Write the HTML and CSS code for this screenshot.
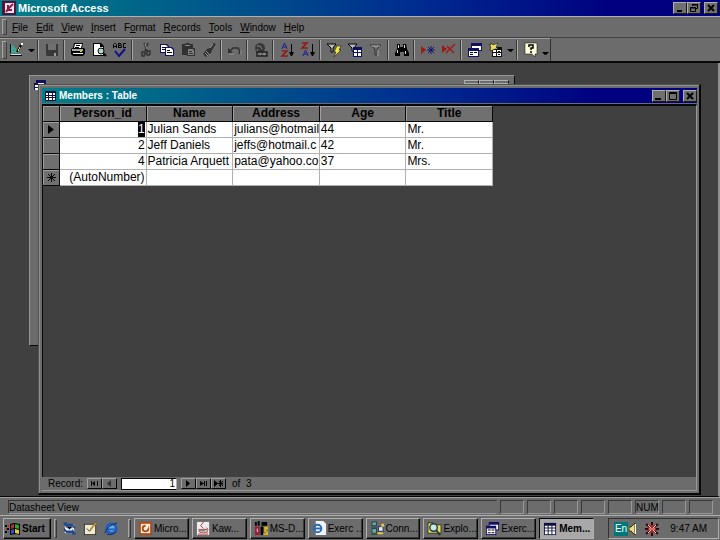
FILE: index.html
```html
<!DOCTYPE html>
<html lang="en">

<head>
  <meta charset="UTF-8">
  <meta name="viewport" content="width=device-width, initial-scale=1.0">
  <title>Microsoft Access</title>
  <link rel="stylesheet" href="styles.css">
</head>

<body>
  <header class="titlebar app-title">
    <svg class="app-icon" width="14" height="14" viewBox="0 0 14 14"><path fill="#5a1038" d="M0 0h14v14H0z"/><path fill="#f4e4ee" d="M3 2h9v10H3z"/><path fill="none" stroke="#8a1848" stroke-width="2" d="M4 11l2-3M6 8l5-5M6 4v5h4"/></svg>
    <h1>Microsoft Access</h1>
    <div class="controls">
      <button aria-label="Minimize"><svg width="12" height="10" viewBox="0 0 12 10"><path d="M3 7h5v2H3z"/></svg></button>
      <button aria-label="Restore"><svg width="12" height="10" viewBox="0 0 12 10"><path fill="none" stroke="#000" d="M4.5 3V1.5h5v4H8M2.500 4.500h5v4h-5zM2 5h6M4 2h6"/></svg></button>
      <button class="close" aria-label="Close"><svg width="12" height="10" viewBox="0 0 12 10"><path fill="none" stroke="#000" stroke-width="2" d="M3 2l6 6M9 2L3 8"/></svg></button>
    </div>
  </header>

  <nav class="menu">
    <a href="#"><u>F</u>ile</a>
    <a href="#"><u>E</u>dit</a>
    <a href="#"><u>V</u>iew</a>
    <a href="#"><u>I</u>nsert</a>
    <a href="#">F<u>o</u>rmat</a>
    <a href="#"><u>R</u>ecords</a>
    <a href="#"><u>T</u>ools</a>
    <a href="#"><u>W</u>indow</a>
    <a href="#"><u>H</u>elp</a>
  </nav>

  <div class="toolbar">
    <div class="tools">
      <button aria-label="View"><svg viewBox="0 0 16 16"><path fill="#30b0a0" fill-rule="evenodd" d="M2 2l9 9H2zM4 7v2h2z"/><path d="M1 13h12v1H1zM1 2h1v9H1z"/><path fill="#ddd" d="M2 12h10v1H2z"/><path fill="none" stroke="#000" stroke-width="2" d="M12 3l-4 7"/><path fill="#e8e050" d="M10 5h1v2h-1zM9 7h1v2H9z"/><path fill="#fff" d="M12 1h2v2h-2z"/></svg></button>
      <button class="drop" aria-label="View options"></button>
      <i class="sep"></i>
      <button aria-label="Save"><svg viewBox="0 0 16 16"><path fill="#383838" d="M2 2h12v12H3l-1-1z"/><path fill="#707070" d="M4 2h8v6H4z"/><path fill="#999" d="M10 11h2v3h-2z"/></svg></button>
      <i class="sep"></i>
      <button aria-label="Print"><svg viewBox="0 0 16 16"><path d="M4 1h9l-1 5h2l1 1v5l-2 2H3l-2-2V7l2-1z"/><path fill="#fff" d="M5 2h7l-1 4H4zM3 11h10v1H3z"/><path fill="#aaa" d="M2 7h11v2H2z"/><path d="M6 3h4v1H6zM5 5h4v1H5z"/><path fill="#e8e020" d="M10 9h2v1h-2z"/></svg></button>
      <button aria-label="Print Preview"><svg viewBox="0 0 16 16"><path d="M2 1h8l3 3v10H2z"/><path fill="#fff" d="M3 2h6v3h3v8H3z"/><circle cx="10" cy="9" r="3" fill="#a8d8d8" stroke="#000"/><path stroke="#000" stroke-width="2" d="M12 11l3 3"/></svg></button>
      <button aria-label="Spelling"><svg viewBox="0 0 16 16"><path fill="none" stroke="#000" d="M1.5 6V2.5l1-1h1l1 1V6M2 4.500h3M6.500 1v5M6 1.500h3v2H6M9.500 4v1.500H6M14 1.500h-2.500v4H14"/><path fill="none" stroke="#10108c" stroke-width="2" d="M3 9l4 5 6-7"/></svg></button>
      <i class="sep"></i>
      <button aria-label="Cut"><svg viewBox="0 0 16 16"><path fill="none" stroke="#303030" stroke-width="1.5" d="M6 1l3 8M10 1L7 9"/><path fill="none" stroke="#303030" stroke-width="1.5" d="M4 10h3v4H4zM9 9h3v4H9z"/><path stroke="#999" d="M7 2l2 5M7 14h1M12 14h1"/></svg></button>
      <button aria-label="Copy"><svg viewBox="0 0 16 16"><path fill="#101060" d="M1 2h7l2 2v7H1z"/><path fill="#fff" d="M2 3h5l2 2v5H2z"/><path fill="#101060" d="M6 5h7l2 2v7H6z"/><path fill="#fff" d="M7 6h5l2 2v5H7z"/><path d="M3 5h3v1H3zM3 7h3v1H3zM8 8h3v1H8zM8 10h5v1H8z"/></svg></button>
      <button aria-label="Paste"><svg viewBox="0 0 16 16"><path fill="#303030" d="M2 2h3l1-1h3l1 1h3v4H7v7H2z"/><path fill="#888" d="M5 3h5v1H5z"/><path fill="#303030" d="M7 6h8v8H7z"/><path fill="#808080" d="M8 7h5l1 2v4H8z"/><path fill="#303030" d="M9 9h3v1H9zM9 11h4v1H9z"/></svg></button>
      <button aria-label="Format Painter"><svg viewBox="0 0 16 16"><path fill="#303030" d="M12 1l3 1-4 6-1 3-5 4-3-3 4-5 3-1z"/><path stroke="#999" d="M4 11l3 3M5 9l4 4M9 6l3-4"/></svg></button>
      <i class="sep"></i>
      <button aria-label="Undo"><svg viewBox="0 0 16 16"><path fill="none" stroke="#303030" stroke-width="1.5" d="M3 9l3-3h5l2 3-1 3"/><path fill="#303030" d="M1 6v5h5z"/><path stroke="#909090" d="M2 12h5M14 8v4"/></svg></button>
      <i class="sep"></i>
      <button aria-label="Insert Hyperlink"><svg viewBox="0 0 16 16"><circle cx="7" cy="6" r="5" fill="#383838"/><path stroke="#888" fill="none" d="M4 4h3l2 3M5 7l-1 2"/><path fill="#777" stroke="#202020" stroke-width="1.5" d="M4 10h5v4H4zM9 10h5v4H9z"/><path stroke="#999" d="M7 12h5"/></svg></button>
      <i class="sep"></i>
      <button aria-label="Sort Ascending"><svg viewBox="0 0 16 16"><path fill="none" stroke="#202090" d="M3 7l2.500-6L8 7M4 5h4"/><path fill="none" stroke="#901818" stroke-width="1.5" d="M3 9h5l-5 5h6"/><path stroke="#000" d="M12.500 2v11"/><path d="M10 10h5l-2 4h-1z"/></svg></button>
      <button aria-label="Sort Descending"><svg viewBox="0 0 16 16"><path fill="none" stroke="#901818" stroke-width="1.5" d="M2 1h5L2 6h6"/><path fill="none" stroke="#202090" d="M3 14l2.500-6L8 14M4 12h4"/><path stroke="#000" d="M12.500 2v11"/><path d="M10 10h5l-2 4h-1z"/></svg></button>
      <i class="sep"></i>
      <button aria-label="Filter By Selection"><svg viewBox="0 0 16 16"><path fill="#bbb" stroke="#000" d="M1 2h9L7 6v4H5V6z"/><path fill="#f0e850" stroke="#000" stroke-width=".5" d="M11 4h4l-2 4h2l-7 7 2-5H8z"/></svg></button>
      <button aria-label="Filter By Form"><svg viewBox="0 0 16 16"><path fill="#bbb" stroke="#000" d="M1 2h9L7 6v3H5V6z"/><path fill="#101060" d="M6 5h9v10H6z"/><path fill="#fff" d="M7 8h3v2H7zM11 8h3v2h-3zM7 11h3v3H7zM11 11h3v3h-3z"/></svg></button>
      <button aria-label="Apply Filter"><svg viewBox="0 0 16 16"><path fill="#777" stroke="#303030" d="M2 3h11L9 7v6H7V7z"/><path stroke="#aaa" d="M3 4h9M10 8v6"/></svg></button>
      <i class="sep"></i>
      <button aria-label="Find"><svg viewBox="0 0 16 16"><path d="M3 2h3v3h3V2h3l1 5 2 4v3h-5v-4H6v4H1v-3l2-4z"/><path stroke="#ddd" d="M4.500 3v3M3.500 8v3M10.500 3v3M11.500 9v3"/></svg></button>
      <i class="sep"></i>
      <button aria-label="New Record"><svg viewBox="0 0 16 16"><path fill="#a01818" d="M1 4l5 4-5 4z"/><path stroke="#101080" d="M11 4v8M7 8h8M8 5l6 6M14 5l-6 6"/></svg></button>
      <button aria-label="Delete Record"><svg viewBox="0 0 16 16"><path fill="#a01818" d="M1 3l5 4-5 4z"/><path stroke="#a01818" stroke-width="1.5" d="M6 4l7 7M14 2L5 11"/></svg></button>
      <i class="sep"></i>
      <button aria-label="Database Window"><svg viewBox="0 0 16 16"><path fill="#101060" d="M4 1h11v8H4z"/><path fill="#fff" d="M5 4h9v4H5z"/><path fill="#101060" d="M1 6h11v9H1z"/><path fill="#fff" d="M2 9h9v5H2z"/><path d="M3 10h3v1H3zM7 10h3v1H7zM3 12h3v1H3z"/></svg></button>
      <button aria-label="New Object"><svg viewBox="0 0 16 16"><path fill="#101010" d="M4 5h10v10H4z"/><path fill="#fff" d="M5 8h3v2H5zM9 8h4v2H9zM5 11h3v3H5zM9 11h4v3H9z"/><path fill="#f0e060" stroke="#000" stroke-width=".5" d="M3 1l2 2 5-2-2 4 2 2H7L2 9l1-4-2-2h2z"/><path d="M10 12h2v1h-2zM10 9h2v1h-2z"/></svg></button>
      <button class="drop" aria-label="New Object options"></button>
      <i class="sep"></i>
      <button aria-label="Office Assistant"><svg viewBox="0 0 16 16"><path fill="#ffffd8" stroke="#000" stroke-width=".5" d="M2 1h12v11h-2v3l-3-3H2z"/><path fill="none" stroke="#000" stroke-width="1.5" d="M6 5V3h4v3H8v2M8 9v2"/></svg></button>
      <button class="drop low" aria-label="More buttons"></button>
    </div>
  </div>

  <main class="desktop">
    <section class="window back" aria-label="Database">
      <svg width="12" height="10" viewBox="0 0 12 10"><path fill="#101060" d="M2 0h10v10H0V3h2z"/><path fill="#fff" d="M1 5h3v2H1zM1 8h3v2H1zM4 3h6v1H4z"/></svg>
      <div class="hidden-controls"><i></i><i></i><i></i></div>
    </section>

    <section class="window front">
      <div class="titlebar">
        <svg class="app-icon" width="11" height="10" viewBox="0 0 11 10"><path fill="#101040" d="M0 0h11v10H0z"/><path fill="#fff" d="M1 2h9v7H1z"/><path fill="#101040" d="M1 4h9v1H1zM1 6h9v1H1zM3 2h1v7H3zM7 2h1v7H7z"/></svg>
        <h2>Members : Table</h2>
        <div class="controls">
          <button aria-label="Minimize table"><svg width="12" height="10" viewBox="0 0 12 10"><path d="M2 7h6v2H2z"/></svg></button>
          <button aria-label="Maximize table"><svg width="12" height="10" viewBox="0 0 12 10"><path fill="none" stroke="#000" d="M2.500 1.500h7v7h-7zM2 2.500h8"/></svg></button>
          <button class="close" aria-label="Close table"><svg width="12" height="10" viewBox="0 0 12 10"><path fill="none" stroke="#000" stroke-width="2" d="M3 2l6 6M9 2L3 8"/></svg></button>
        </div>
      </div>

      <div class="sheet">
        <table>
          <thead>
            <tr>
              <th class="mark"></th>
              <th>Person_id</th>
              <th>Name</th>
              <th>Address</th>
              <th>Age</th>
              <th>Title</th>
            </tr>
          </thead>
          <tbody>
            <tr>
              <th class="mark"><svg width="6" height="9" viewBox="0 0 6 9"><path d="M0 0l6 4.500L0 9z"/></svg></th>
              <td class="num"><mark>1</mark></td>
              <td>Julian Sands</td>
              <td>julians@hotmail</td>
              <td>44</td>
              <td>Mr.</td>
            </tr>
            <tr>
              <th class="mark"></th>
              <td class="num">2</td>
              <td>Jeff Daniels</td>
              <td>jeffs@hotmail.c</td>
              <td>42</td>
              <td>Mr.</td>
            </tr>
            <tr>
              <th class="mark"></th>
              <td class="num">4</td>
              <td>Patricia Arquett</td>
              <td>pata@yahoo.co</td>
              <td>37</td>
              <td>Mrs.</td>
            </tr>
            <tr>
              <th class="mark"><svg width="9" height="9" viewBox="0 0 9 9"><path stroke="#000" d="M4.500 0v9M0 4.500h9M1 1l7 7M8 1L1 8"/></svg></th>
              <td class="num">(AutoNumber)</td>
              <td></td>
              <td></td>
              <td></td>
              <td></td>
            </tr>
          </tbody>
        </table>
      </div>

      <div class="records">
        <label for="record">Record:</label>
        <div class="group">
          <button aria-label="First record"><svg width="9" height="7" viewBox="0 0 9 7"><path d="M1 1h1v5H1zM5 1v5L2 3.500zM7 1h1v5H7z"/></svg></button>
          <button aria-label="Previous record"><svg width="9" height="7" viewBox="0 0 9 7"><path fill="#333" d="M6 0v7L2 3.500z"/></svg></button>
        </div>
        <input id="record" type="text" value="1">
        <div class="group">
          <button aria-label="Next record"><svg width="9" height="7" viewBox="0 0 9 7"><path d="M2 0v7l4-3.500z"/></svg></button>
          <button aria-label="Last record"><svg width="9" height="7" viewBox="0 0 9 7"><path d="M1 1v5l4-2.500zM5 1h1v5H5zM7 1h1v5H7z"/></svg></button>
          <button aria-label="New record"><svg width="9" height="7" viewBox="0 0 9 7"><path d="M0 0v7l4-3.500z"/><path stroke="#000" d="M6.500 0v7M4 3.500h5M5 1l4 5M9 1L5 6"/></svg></button>
        </div>
        <span>of&nbsp; 3</span>
      </div>
    </section>
  </main>

  <div class="status">
    <span class="message">Datasheet View</span>
    <span></span>
    <span></span>
    <span></span>
    <span></span>
    <span></span>
    <span>NUM</span>
    <span></span>
    <span></span>
  </div>

  <footer class="taskbar">
    <button class="start"><svg width="16" height="14" viewBox="0 0 16 14"><path d="M5 2l4-1 6 1v11l-4-1-6 1zM0 3h2v2H0zM2 6h2v2H2zM0 9h2v2H0z"/><path fill="#c02828" d="M6 3l3-1v4L6 7z"/><path fill="#30a030" d="M10 2l4 1v4l-4-1z"/><path fill="#3050d0" d="M6 8l3-1v4l-3 1z"/><path fill="#e0d030" d="M10 7l4 1v4l-4-1z"/><path fill="#c02828" d="M3 3h1v2H3zM1 6h1v2H1z"/><path fill="#3050d0" d="M3 9h1v2H3z"/></svg>Start</button>
    <i class="grip"></i>
    <div class="quick">
      <button aria-label="Outlook Express"><svg viewBox="0 0 16 16"><path fill="#fff" d="M3 4h10v9H3z"/><path fill="#204890" d="M1 2l4-1v2h6l3 3v3l-3-3H5v2zM15 14l-4 1v-2H5l-3-3V7l3 3h6V8z"/><path stroke="#90a8c8" d="M4 6l4 3 4-3"/></svg></button>
      <button aria-label="Show Desktop"><svg viewBox="0 0 16 16"><path fill="#303030" d="M1 3h13v12H1z"/><path fill="#f0ead0" d="M2 4h11v10H2z"/><path fill="none" stroke="#303030" d="M4 8l3 3 7-10"/><path stroke="#b89030" stroke-width="2" d="M8 9l6-7"/></svg></button>
      <button aria-label="Internet Explorer"><svg viewBox="0 0 16 16"><circle cx="8" cy="8" r="5" fill="#78a8d8" stroke="#1860c0" stroke-width="3"/><path stroke="#1860c0" stroke-width="2" d="M4 9h9"/><path fill="none" stroke="#102860" d="M1 13Q3 5 14 2M3 14q6 2 10-3"/></svg></button>
    </div>
    <i class="grip"></i>
    <div class="tasks">
      <button><svg viewBox="0 0 16 16"><path fill="#b04818" d="M1 1h14v14H1z"/><path fill="#fff0d8" d="M3 3h10v10H3z"/><circle cx="8" cy="8" r="3" fill="none" stroke="#b04818" stroke-width="2"/><path fill="#fff0d8" d="M8 4h3v4H8z"/></svg><span>Micro...</span></button>
      <button><svg viewBox="0 0 16 16"><path fill="#eee" d="M1 1h13v14H1z"/><path fill="none" stroke="#b03838" d="M8 1l-3 4 3 3M3 9h9v3H4zM2 14h11M11 7l2 2"/><path fill="#888" d="M4 9h6v2H4z"/></svg><span>Kaw...</span></button>
      <button><svg viewBox="0 0 16 16"><path d="M1 1h2v4H1zM4 0h2v5H4zM8 1h6v4H8z"/><path fill="#a01838" d="M1 6h5v9H1z"/><path d="M7 6h3v9H7z"/><path fill="#d8b820" d="M11 6h4v3h-2v2h2v4h-5v-2h3v-1h-2z"/><path fill="#ddd" d="M3 8h1v4H3z"/></svg><span>MS-D...</span></button>
      <button><svg viewBox="0 0 16 16"><path fill="#f0f4f8" d="M4 0h8l3 3v12H4z"/><circle cx="6" cy="8" r="4" fill="none" stroke="#2868b8" stroke-width="2"/><path stroke="#2868b8" stroke-width="2" d="M3 8h7"/></svg><span>Exerc ...</span></button>
      <button><svg viewBox="0 0 16 16"><path fill="#68a8a8" stroke="#204040" d="M2 1h5v4H2zM2 8h5v5H2z"/><path fill="#204040" d="M1 6h7v1H1zM1 14h7v1H1z"/><path fill="#e8e8e8" stroke="#182878" d="M9 6h5v5H9z"/><path fill="#e0c840" d="M12 3h3v3h-3zM8 12h6v2H8z"/></svg><span>Conn...</span></button>
      <button><svg viewBox="0 0 16 16"><path fill="#e8d868" stroke="#303020" d="M1 2h5l1 2h8v9H1z"/><circle cx="7" cy="7" r="4" fill="#c8e8e8" stroke="#203838" stroke-width="1.5"/><path stroke="#203838" stroke-width="2" d="M10 10l4 5"/></svg><span>Explo...</span></button>
      <button><svg viewBox="0 0 16 16"><path fill="#101060" d="M4 1h11v9H4z"/><path fill="#fff" d="M5 4h9v5H5z"/><path fill="#101060" d="M1 5h11v10H1z"/><path fill="#fff" d="M2 8h9v6H2z"/><path d="M3 9h3v1H3zM7 9h3v1H7zM3 12h3v1H3zM7 12h3v1H7z"/></svg><span>Exerc...</span></button>
      <button class="active"><svg viewBox="0 0 16 16"><path fill="#101040" d="M1 2h13v13H1z"/><path fill="#fff" d="M2 5h3v2H2zM6 5h3v2H6zM10 5h3v2h-3zM2 8h3v2H2zM6 8h3v2H6zM10 8h3v2h-3zM2 11h3v3H2zM6 11h3v3H6zM10 11h3v3h-3z"/></svg><span>Mem...</span></button>
    </div>
    <div class="tray">
      <span class="lang">En</span>
      <svg width="8" height="12" viewBox="0 0 8 12"><path fill="#e8e080" stroke="#303010" d="M0 4h2l4-4v12L2 8H0z"/><path fill="#fff" d="M6 1h1v10H6z"/></svg>
      <svg class="bug" width="14" height="14" viewBox="0 0 14 14"><path stroke="#300808" stroke-width="2" d="M1 2l12 10M13 2L1 12M7 0v14M0 7h14"/><circle cx="7" cy="7" r="4" fill="#b02020"/><path stroke="#e8c8c8" d="M3 3l3 3M11 3L8 6M3 11l3-3M11 11L8 8M4 7h6"/></svg>
      <time>9:47 AM</time>
    </div>
  </footer>
</body>

</html>
```
FILE: styles.css
```css
* {
  box-sizing: border-box;
}

body {
  margin: 0;
  height: 100vh;
  display: flex;
  flex-direction: column;
  overflow: hidden;
  background-color: #6c6c6c;
  color: #000;
  font-family: "Liberation Sans", Arial, sans-serif;
  font-size: 10px;
}

button {
  padding: 0;
  border: 0;
  background: none;
  color: inherit;
  font: inherit;
}

svg {
  display: block;
  flex: none;
}

/* Title bars */
.titlebar {
  display: flex;
  align-items: center;
  gap: 2px;
  height: 16px;
  padding: 0 2px;
  background: linear-gradient(90deg, #008088, #00508a 34%, #002c90 58%, #000080 85%);
  color: #fff;
}

.titlebar h1,
.titlebar h2 {
  flex: 1;
  margin: 0;
  font-size: 10px;
  font-weight: bold;
}

.titlebar h1 {
  font-size: 11px;
}

.controls {
  display: flex;
}

.controls button {
  width: 14px;
  height: 12px;
  background-color: #707070;
  border: 1px solid;
  border-color: #b0b0b0 #181818 #181818 #b0b0b0;
  overflow: hidden;
}

.controls .close {
  margin-left: 3px;
}

/* Menu and toolbar */
.menu {
  display: flex;
  align-items: center;
  gap: 8px;
  height: 22px;
  padding-left: 12px;
  border-top: 1px solid #b0b0b0;
  border-bottom: 1px solid #404040;
  position: relative;
}

.menu a {
  color: #000;
  text-decoration: none;
}

.menu::before,
.tools::before {
  content: "";
  position: absolute;
  left: 2px;
  top: 2px;
  bottom: 2px;
  width: 3px;
  border: 1px solid;
  border-color: #a8a8a8 #404040 #404040 #a8a8a8;
}

.toolbar {
  display: flex;
  height: 25px;
  border-bottom: 2px solid #080808;
}

.tools {
  position: relative;
  display: flex;
  align-items: center;
  padding-left: 6px;
  border-top: 1px solid #a0a0a0;
  border-right: 1px solid #303030;
}

.tools button {
  width: 21px;
  height: 20px;
  padding: 0 3px;
}

.tools svg {
  width: 16px;
  height: 16px;
}

.tools .drop {
  width: 9px;
  padding: 0 1px;
}

.drop::before {
  content: "";
  display: block;
  border: 3px solid transparent;
  border-top-color: #000;
  border-bottom: 0;
}

.tools .low {
  padding-top: 6px;
}

.sep {
  width: 2px;
  height: 20px;
  margin: 0 2px 0 1px;
  border-left: 1px solid #383838;
  border-right: 1px solid #a8a8a8;
}

/* Child windows */
.desktop {
  flex: 1;
  position: relative;
  background-color: #404040;
  border-right: 2px solid #909090;
  border-bottom: 1px solid #080808;
}

.window {
  position: absolute;
  background-color: #6c6c6c;
  border: 1px solid;
  border-color: #989898 #080808 #080808 #989898;
}

.back {
  left: 29px;
  top: 12px;
  width: 486px;
  height: 271px;
  padding: 4px;
}

.hidden-controls {
  position: absolute;
  right: 5px;
  top: 4px;
  display: flex;
}

.hidden-controls i {
  width: 15px;
  height: 4px;
  border: 1px solid #b0b0b0;
  border-right-color: #080808;
}

.front {
  left: 38px;
  top: 21px;
  right: 17px;
  bottom: 1px;
  display: flex;
  flex-direction: column;
  padding: 3px 2px 2px 3px;
  border-width: 1px 2px 2px 1px;
  border-color: #505050 #080808 #080808 #505050;
  box-shadow: inset 1px 1px #909090;
}

.front .titlebar {
  height: 15px;
  padding: 0 0 0 3px;
  gap: 3px;
}

.sheet {
  flex: 1;
  margin-top: 1px;
  background-color: #404040;
  border: solid #080808;
  border-width: 2px 0 0 1px;
  border-right: 1px solid #989898;
}

table {
  width: 450px;
  table-layout: fixed;
  border-collapse: separate;
  border-spacing: 0;
  font-size: 12px;
  line-height: 15px;
}

th,
td {
  height: 16px;
  padding: 0 1px;
  overflow: hidden;
  white-space: nowrap;
  text-align: left;
}

td {
  padding-right: 0;
  background-color: #fff;
  border-right: 1px solid #b0b0b0;
  border-bottom: 1px solid #b0b0b0;
}

th {
  background-color: #707070;
  border-right: 1px solid #080808;
  border-bottom: 1px solid #080808;
  box-shadow: inset 1px 1px #a0a0a0;
  text-align: center;
}

.mark {
  width: 17px;
  padding: 0;
}

.mark svg {
  margin: 0 auto;
}

.num {
  padding-right: 1px;
  text-align: right;
}

mark {
  display: inline-block;
  background-color: #000;
  color: #fff;
}

/* Record navigator */
.records {
  display: flex;
  align-items: center;
  gap: 4px;
  height: 14px;
  padding-left: 6px;
  border-right: 1px solid #989898;
  border-bottom: 1px solid #989898;
}

.records .group {
  display: flex;
}

.records button {
  display: flex;
  align-items: center;
  justify-content: center;
  width: 15px;
  height: 11px;
  border: 1px solid;
  border-color: #a0a0a0 #080808 #080808 #a0a0a0;
}

.records input {
  width: 56px;
  height: 12px;
  padding: 0 1px;
  border: 1px solid #080808;
  border-right-color: #b0b0b0;
  background-color: #fff;
  color: #000;
  font: inherit;
  text-align: right;
}

.records > span {
  margin-left: 2px;
}

/* Status line */
.status {
  display: flex;
  gap: 3px;
  height: 18px;
  padding: 2px 7px 1px 8px;
  border-top: 1px solid #a0a0a0;
}

.status span {
  width: 24px;
  border: 1px solid;
  border-color: #383838 #989898 #989898 #383838;
  line-height: 13px;
  text-align: center;
}

.status .message {
  flex: 1;
  border-right-color: transparent;
  text-align: left;
}

/* Taskbar */
.taskbar {
  display: flex;
  align-items: center;
  height: 25px;
  padding: 1px 1px 0 3px;
  border-top: 1px solid #b0b0b0;
}

.start,
.tasks button {
  display: flex;
  align-items: center;
  height: 21px;
  border: 1px solid;
  border-color: #b0b0b0 #080808 #080808 #b0b0b0;
  box-shadow: inset -1px -1px #383838;
}

.start {
  width: 48px;
  padding-left: 1px;
  gap: 1px;
  font-weight: bold;
}

.grip {
  width: 3px;
  height: 19px;
  margin: 0 3px;
  border: 1px solid;
  border-color: #a8a8a8 #383838 #383838 #a8a8a8;
}

.quick {
  display: flex;
  gap: 6px;
  width: 65px;
  padding-left: 2px;
}

.quick svg,
.tasks svg {
  width: 15px;
  height: 15px;
}

.tasks {
  flex: 1;
  display: flex;
  gap: 3px;
  min-width: 0;
  margin-right: 14px;
}

.tasks button {
  flex: 1;
  gap: 1px;
  min-width: 0;
  padding-left: 3px;
  overflow: hidden;
  white-space: nowrap;
}

.tasks .active {
  background-color: #a8a8a8;
  border-color: #080808 #b0b0b0 #b0b0b0 #080808;
  box-shadow: none;
  font-weight: bold;
}

.tray {
  display: flex;
  align-items: center;
  width: 111px;
  height: 21px;
  padding: 0 5px;
  border: 1px solid;
  border-color: #303030 #b0b0b0 #b0b0b0 #303030;
}

.lang {
  width: 14px;
  margin-right: 1px;
  background-color: #007878;
  color: #fff;
  line-height: 14px;
  text-align: center;
}

.bug {
  margin-left: 8px;
}

.tray time {
  margin: 0 6px 0 auto;
  white-space: nowrap;
}
```
